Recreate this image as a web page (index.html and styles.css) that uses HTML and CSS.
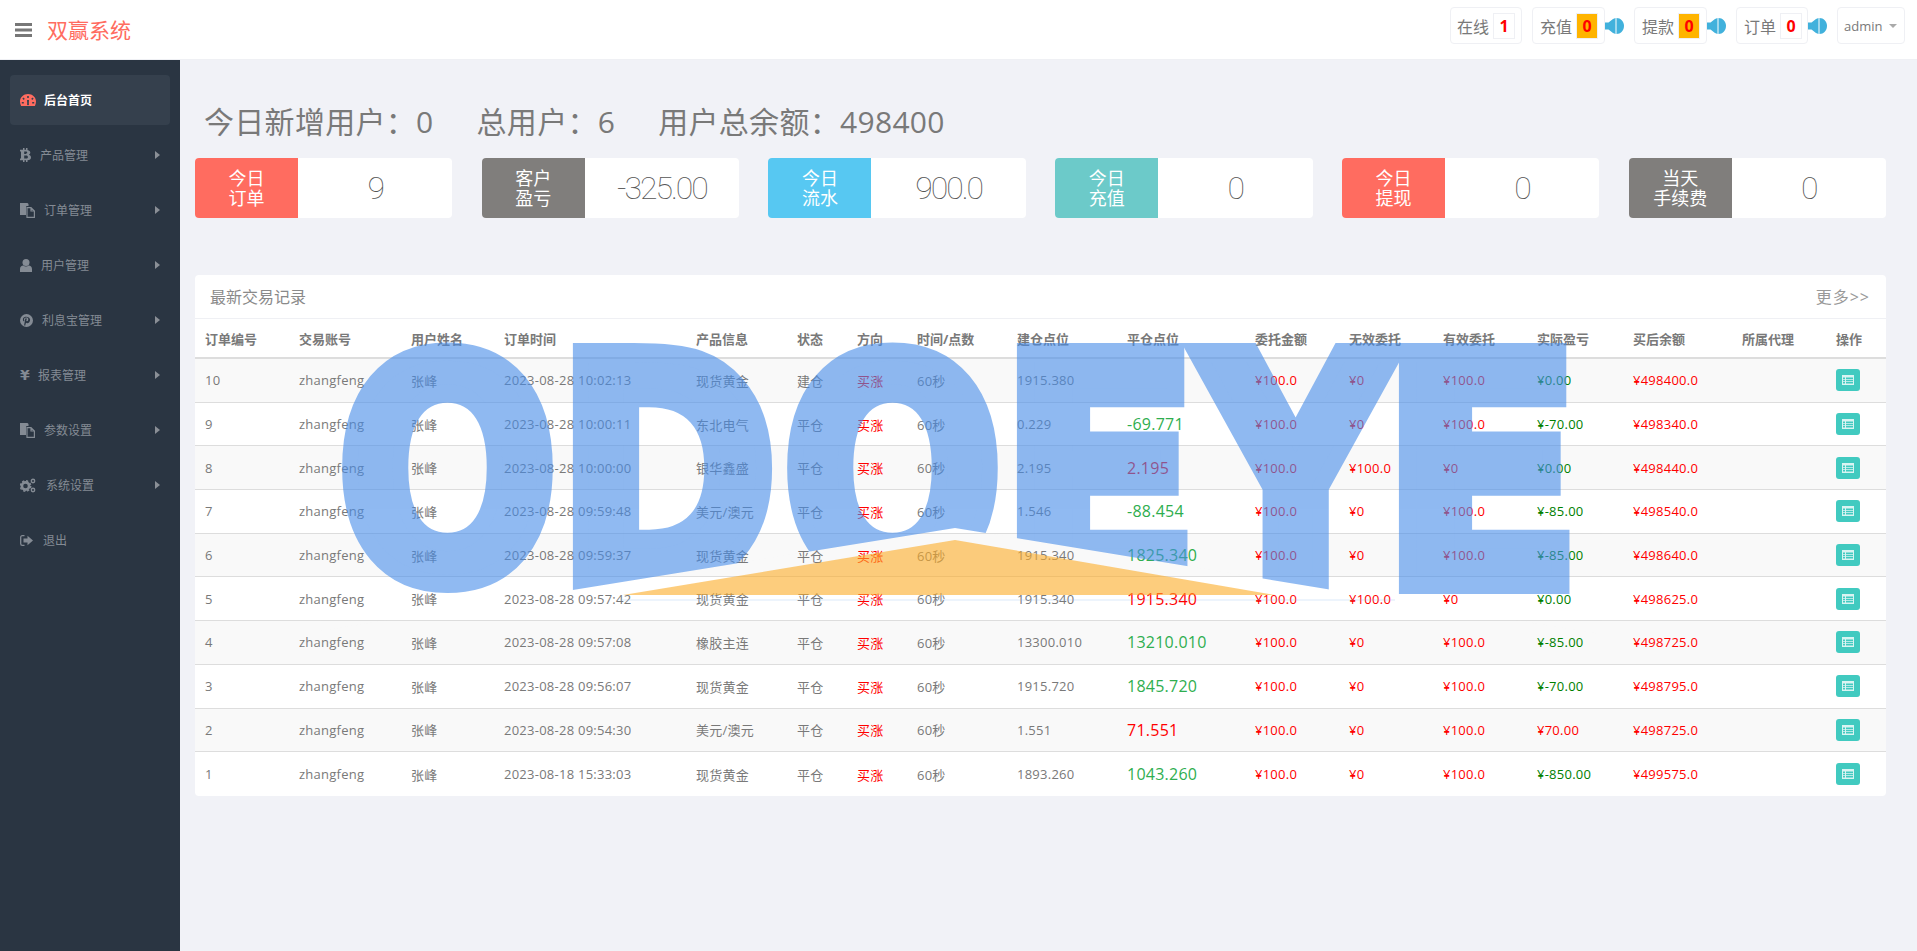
FILE: index.html
```html
<!DOCTYPE html>
<html lang="zh-CN">

<head>
    <meta charset="utf-8">
    <title>双赢系统</title>
    <link rel="stylesheet" href="styles.css">
</head>

<body>
    <header class="topbar">
        <div class="brand">
            <svg class="burger" width="17" height="14" viewBox="0 0 17 14"><path d="M0 0h17v3H0zM0 5.500h17v3H0zM0 11h17v3H0z"/></svg>
            <span class="brand_name">双赢系统</span>
        </div>
        <div class="top_right">
            <div class="notice"><span>在线</span><b class="count">1</b></div>
            <div class="notice notice_sound"><span>充值</span><b class="count count_warn">0</b></div>
            <svg class="speaker" width="19" height="16" viewBox="0 0 19 16"><path d="M0 4.500h3.500L8 1l2.500-1v16L8 15l-4.500-3.500H0z"/><path d="M11.500 0c4 0 7.500 3.500 7.500 8s-3.500 8-7.500 8z"/></svg>
            <div class="notice notice_sound"><span>提款</span><b class="count count_warn">0</b></div>
            <svg class="speaker" width="19" height="16" viewBox="0 0 19 16"><path d="M0 4.500h3.500L8 1l2.500-1v16L8 15l-4.500-3.500H0z"/><path d="M11.500 0c4 0 7.500 3.500 7.500 8s-3.500 8-7.500 8z"/></svg>
            <div class="notice notice_sound notice_last"><span>订单</span><b class="count">0</b></div>
            <svg class="speaker" width="19" height="16" viewBox="0 0 19 16"><path d="M0 4.500h3.500L8 1l2.500-1v16L8 15l-4.500-3.500H0z"/><path d="M11.500 0c4 0 7.500 3.500 7.500 8s-3.500 8-7.500 8z"/></svg>
            <div class="notice user_menu"><span class="user_name">admin</span><i class="caret_down"></i></div>
        </div>
    </header>

    <div class="body_main">
        <aside class="sidebar">
            <a class="side_item side_active">
                <svg class="side_icon" width="16" height="12" viewBox="0 0 16 12"><path fill-rule="evenodd" d="M8 0c4.500 0 8 3.300 8 7.600 0 1.700-.4 3.100-1.100 4.400H1.100C.4 10.700 0 9.300 0 7.600 0 3.300 3.500 0 8 0zM7.200 2v2h1.600V2zM3.300 3.500L2.400 4.700 3.800 6l1-1.200zM12.700 3.500L11.200 4.800l1 1.200 1.400-1.300zM7 6l.2 3.600a1 1 0 1 0 1.600 0L9 6zM1.800 8v1.500h2V8zM12.200 8v1.500h2V8z"/></svg>
                <span>后台首页</span>
            </a>
            <a class="side_item">
                <svg class="side_icon" width="11" height="14" viewBox="0 0 11 14"><path fill-rule="evenodd" d="M3 0h1.500v1.800H6V0h1.500v1.900C9.300 2.300 10.300 3.200 10.300 4.600c0 1-.5 1.700-1.400 2.100 1.300.4 2.100 1.300 2.100 2.700 0 1.800-1.300 2.700-3.500 2.800V14H6v-1.800H4.500V14H3v-1.800H0v-1.600h1V3.400H0V1.800h3zM4.200 3.500v2.400h1.500c1 0 1.500-.4 1.500-1.200s-.5-1.200-1.500-1.200zM4.200 7.500v3.100h2c1.100 0 1.700-.5 1.700-1.500s-.6-1.600-1.700-1.600z"/></svg>
                <span>产品管理</span><i class="caret_right"></i>
            </a>
            <a class="side_item">
                <svg class="side_icon" width="15" height="15" viewBox="0 0 15 15"><path d="M0 0h7.500l1 1v2H7a1 1 0 0 0-1 1v8H0z"/><path fill="none" stroke="currentColor" stroke-width="1.200" d="M7 4.600h4l3.400 3.400v6.400H7zM11 4.600V8h3.400"/></svg>
                <span>订单管理</span><i class="caret_right"></i>
            </a>
            <a class="side_item">
                <svg class="side_icon" width="12" height="13" viewBox="0 0 12 13"><circle cx="6" cy="3.500" r="3.500"/><path d="M0 13V10c0-2 1.500-3.300 3.300-3.400C4 7.100 5 7.500 6 7.500s2-.4 2.700-.9C10.500 6.700 12 8 12 10v3z"/></svg>
                <span>用户管理</span><i class="caret_right"></i>
            </a>
            <a class="side_item">
                <svg class="side_icon" width="13" height="13" viewBox="0 0 13 13"><path fill-rule="evenodd" d="M6.500 0a6.500 6.500 0 1 1 0 13 6.500 6.500 0 0 1 0-13zM5.300 2.700c-1.500.4-2.400 1.500-2.400 2.800 0 .9.400 1.600 1 1.900l.5-.9c-.3-.3-.4-.6-.4-1 0-1.100.9-1.900 2.300-1.900 1.200 0 2 .7 2 1.700 0 1.200-.6 2-1.300 2-.5 0-.8-.3-.7-.8l.6-2.100H5.300L4.100 11.200l1 .5L6 8.700c.3.300.8.500 1.300.5 1.500 0 2.800-1.500 2.800-3.400 0-1.900-1.700-3.400-4.800-3.100z"/></svg>
                <span>利息宝管理</span><i class="caret_right"></i>
            </a>
            <a class="side_item">
                <span class="yen_icon side_icon">¥</span>
                <span>报表管理</span><i class="caret_right"></i>
            </a>
            <a class="side_item">
                <svg class="side_icon" width="15" height="15" viewBox="0 0 15 15"><path d="M0 0h7.500l1 1v2H7a1 1 0 0 0-1 1v8H0z"/><path fill="none" stroke="currentColor" stroke-width="1.200" d="M7 4.600h4l3.400 3.400v6.400H7zM11 4.600V8h3.400"/></svg>
                <span>参数设置</span><i class="caret_right"></i>
            </a>
            <a class="side_item side_cogs">
                <svg class="side_icon" width="16" height="15" viewBox="0 0 16 15"><circle cx="5.500" cy="8" r="3.600" fill="none" stroke="currentColor" stroke-width="2.600"/><circle cx="5.500" cy="8" r="5.200" fill="none" stroke="currentColor" stroke-width="1.500" stroke-dasharray="2.200 1.880"/><circle cx="13" cy="3" r="1.700" fill="none" stroke="currentColor" stroke-width="1.400"/><circle cx="13" cy="12" r="1.700" fill="none" stroke="currentColor" stroke-width="1.400"/></svg>
                <span>系统设置</span><i class="caret_right"></i>
            </a>
            <a class="side_item side_cogs">
                <svg class="side_icon" width="13" height="11" viewBox="0 0 13 11"><path fill="none" stroke="currentColor" stroke-width="1.300" d="M4.500.700H2.300C1.300.700.700 1.300.700 2.300v6.400c0 1 .6 1.600 1.600 1.600h2.200"/><path d="M3.500 3.500H7.500V.8L13 5.500 7.500 10.200V7.500h-4z"/></svg>
                <span>退出</span>
            </a>
        </aside>

        <main class="content">
            <h2 class="summary">
                <span>今日新增用户：0</span>
                <span>总用户：6</span>
                <span>用户总余额：498400</span>
            </h2>

            <div class="stats">
                <div class="stat"><div class="stat_label bg_red">今日<br>订单</div><div class="stat_value">9</div></div>
                <div class="stat"><div class="stat_label bg_gray">客户<br>盈亏</div><div class="stat_value">-325.00</div></div>
                <div class="stat"><div class="stat_label bg_blue">今日<br>流水</div><div class="stat_value">900.0</div></div>
                <div class="stat"><div class="stat_label bg_teal">今日<br>充值</div><div class="stat_value">0</div></div>
                <div class="stat"><div class="stat_label bg_red">今日<br>提现</div><div class="stat_value">0</div></div>
                <div class="stat"><div class="stat_label bg_gray">当天<br>手续费</div><div class="stat_value">0</div></div>
            </div>

            <section class="panel">
                <div class="panel_head"><span>最新交易记录</span><span class="more">更多&gt;&gt;</span></div>
                <table class="orders">
                    <thead>
                        <tr>
                            <th>订单编号</th><th>交易账号</th><th>用户姓名</th><th>订单时间</th><th>产品信息</th><th>状态</th><th>方向</th><th>时间/点数</th><th>建仓点位</th><th>平仓点位</th><th>委托金额</th><th>无效委托</th><th>有效委托</th><th>实际盈亏</th><th>买后余额</th><th>所属代理</th><th>操作</th>
                        </tr>
                    </thead>
                    <tbody>
                        <tr><td>10</td><td>zhangfeng</td><td>张峰</td><td>2023-08-28 10:02:13</td><td>现货黄金</td><td>建仓</td><td class="red">买涨</td><td>60秒</td><td>1915.380</td><td class="close"></td><td class="red">¥100.0</td><td class="red">¥0</td><td class="red">¥100.0</td><td class="green">¥0.00</td><td class="red">¥498400.0</td><td></td><td><a class="btn_view"><svg width="12" height="10" viewBox="0 0 12 10"><path fill-rule="evenodd" d="M0 0h12v10H0zM1 2.500v1.400h2V2.500zM4 2.500v1.400h7V2.500zM1 4.800v1.400h2V4.800zM4 4.800v1.400h7V4.800zM1 7.100v1.400h2V7.100zM4 7.100v1.400h7V7.100z"/></svg></a></td></tr>
                        <tr><td>9</td><td>zhangfeng</td><td>张峰</td><td>2023-08-28 10:00:11</td><td>东北电气</td><td>平仓</td><td class="red">买涨</td><td>60秒</td><td>0.229</td><td class="close up">-69.771</td><td class="red">¥100.0</td><td class="red">¥0</td><td class="red">¥100.0</td><td class="green">¥-70.00</td><td class="red">¥498340.0</td><td></td><td><a class="btn_view"><svg width="12" height="10" viewBox="0 0 12 10"><path fill-rule="evenodd" d="M0 0h12v10H0zM1 2.500v1.400h2V2.500zM4 2.500v1.400h7V2.500zM1 4.800v1.400h2V4.800zM4 4.800v1.400h7V4.800zM1 7.100v1.400h2V7.100zM4 7.100v1.400h7V7.100z"/></svg></a></td></tr>
                        <tr><td>8</td><td>zhangfeng</td><td>张峰</td><td>2023-08-28 10:00:00</td><td>银华鑫盛</td><td>平仓</td><td class="red">买涨</td><td>60秒</td><td>2.195</td><td class="close red">2.195</td><td class="red">¥100.0</td><td class="red">¥100.0</td><td class="red">¥0</td><td class="green">¥0.00</td><td class="red">¥498440.0</td><td></td><td><a class="btn_view"><svg width="12" height="10" viewBox="0 0 12 10"><path fill-rule="evenodd" d="M0 0h12v10H0zM1 2.500v1.400h2V2.500zM4 2.500v1.400h7V2.500zM1 4.800v1.400h2V4.800zM4 4.800v1.400h7V4.800zM1 7.100v1.400h2V7.100zM4 7.100v1.400h7V7.100z"/></svg></a></td></tr>
                        <tr><td>7</td><td>zhangfeng</td><td>张峰</td><td>2023-08-28 09:59:48</td><td>美元/澳元</td><td>平仓</td><td class="red">买涨</td><td>60秒</td><td>1.546</td><td class="close up">-88.454</td><td class="red">¥100.0</td><td class="red">¥0</td><td class="red">¥100.0</td><td class="green">¥-85.00</td><td class="red">¥498540.0</td><td></td><td><a class="btn_view"><svg width="12" height="10" viewBox="0 0 12 10"><path fill-rule="evenodd" d="M0 0h12v10H0zM1 2.500v1.400h2V2.500zM4 2.500v1.400h7V2.500zM1 4.800v1.400h2V4.800zM4 4.800v1.400h7V4.800zM1 7.100v1.400h2V7.100zM4 7.100v1.400h7V7.100z"/></svg></a></td></tr>
                        <tr><td>6</td><td>zhangfeng</td><td>张峰</td><td>2023-08-28 09:59:37</td><td>现货黄金</td><td>平仓</td><td class="red">买涨</td><td>60秒</td><td>1915.340</td><td class="close up">1825.340</td><td class="red">¥100.0</td><td class="red">¥0</td><td class="red">¥100.0</td><td class="green">¥-85.00</td><td class="red">¥498640.0</td><td></td><td><a class="btn_view"><svg width="12" height="10" viewBox="0 0 12 10"><path fill-rule="evenodd" d="M0 0h12v10H0zM1 2.500v1.400h2V2.500zM4 2.500v1.400h7V2.500zM1 4.800v1.400h2V4.800zM4 4.800v1.400h7V4.800zM1 7.100v1.400h2V7.100zM4 7.100v1.400h7V7.100z"/></svg></a></td></tr>
                        <tr><td>5</td><td>zhangfeng</td><td>张峰</td><td>2023-08-28 09:57:42</td><td>现货黄金</td><td>平仓</td><td class="red">买涨</td><td>60秒</td><td>1915.340</td><td class="close red">1915.340</td><td class="red">¥100.0</td><td class="red">¥100.0</td><td class="red">¥0</td><td class="green">¥0.00</td><td class="red">¥498625.0</td><td></td><td><a class="btn_view"><svg width="12" height="10" viewBox="0 0 12 10"><path fill-rule="evenodd" d="M0 0h12v10H0zM1 2.500v1.400h2V2.500zM4 2.500v1.400h7V2.500zM1 4.800v1.400h2V4.800zM4 4.800v1.400h7V4.800zM1 7.100v1.400h2V7.100zM4 7.100v1.400h7V7.100z"/></svg></a></td></tr>
                        <tr><td>4</td><td>zhangfeng</td><td>张峰</td><td>2023-08-28 09:57:08</td><td>橡胶主连</td><td>平仓</td><td class="red">买涨</td><td>60秒</td><td>13300.010</td><td class="close up">13210.010</td><td class="red">¥100.0</td><td class="red">¥0</td><td class="red">¥100.0</td><td class="green">¥-85.00</td><td class="red">¥498725.0</td><td></td><td><a class="btn_view"><svg width="12" height="10" viewBox="0 0 12 10"><path fill-rule="evenodd" d="M0 0h12v10H0zM1 2.500v1.400h2V2.500zM4 2.500v1.400h7V2.500zM1 4.800v1.400h2V4.800zM4 4.800v1.400h7V4.800zM1 7.100v1.400h2V7.100zM4 7.100v1.400h7V7.100z"/></svg></a></td></tr>
                        <tr><td>3</td><td>zhangfeng</td><td>张峰</td><td>2023-08-28 09:56:07</td><td>现货黄金</td><td>平仓</td><td class="red">买涨</td><td>60秒</td><td>1915.720</td><td class="close up">1845.720</td><td class="red">¥100.0</td><td class="red">¥0</td><td class="red">¥100.0</td><td class="green">¥-70.00</td><td class="red">¥498795.0</td><td></td><td><a class="btn_view"><svg width="12" height="10" viewBox="0 0 12 10"><path fill-rule="evenodd" d="M0 0h12v10H0zM1 2.500v1.400h2V2.500zM4 2.500v1.400h7V2.500zM1 4.800v1.400h2V4.800zM4 4.800v1.400h7V4.800zM1 7.100v1.400h2V7.100zM4 7.100v1.400h7V7.100z"/></svg></a></td></tr>
                        <tr><td>2</td><td>zhangfeng</td><td>张峰</td><td>2023-08-28 09:54:30</td><td>美元/澳元</td><td>平仓</td><td class="red">买涨</td><td>60秒</td><td>1.551</td><td class="close red">71.551</td><td class="red">¥100.0</td><td class="red">¥0</td><td class="red">¥100.0</td><td class="red">¥70.00</td><td class="red">¥498725.0</td><td></td><td><a class="btn_view"><svg width="12" height="10" viewBox="0 0 12 10"><path fill-rule="evenodd" d="M0 0h12v10H0zM1 2.500v1.400h2V2.500zM4 2.500v1.400h7V2.500zM1 4.800v1.400h2V4.800zM4 4.800v1.400h7V4.800zM1 7.100v1.400h2V7.100zM4 7.100v1.400h7V7.100z"/></svg></a></td></tr>
                        <tr><td>1</td><td>zhangfeng</td><td>张峰</td><td>2023-08-18 15:33:03</td><td>现货黄金</td><td>平仓</td><td class="red">买涨</td><td>60秒</td><td>1893.260</td><td class="close up">1043.260</td><td class="red">¥100.0</td><td class="red">¥0</td><td class="red">¥100.0</td><td class="green">¥-850.00</td><td class="red">¥499575.0</td><td></td><td><a class="btn_view"><svg width="12" height="10" viewBox="0 0 12 10"><path fill-rule="evenodd" d="M0 0h12v10H0zM1 2.500v1.400h2V2.500zM4 2.500v1.400h7V2.500zM1 4.800v1.400h2V4.800zM4 4.800v1.400h7V4.800zM1 7.100v1.400h2V7.100zM4 7.100v1.400h7V7.100z"/></svg></a></td></tr>
                    </tbody>
                </table>
            </section>
        </main>
    </div>

    <!-- watermark over the page -->
    <svg class="watermark" width="1917" height="951" viewBox="0 0 1917 951">
        <defs>
            <clipPath id="wmCut"><polygon points="0,0 1917,0 1917,686 955,528 0,683"/></clipPath>
        </defs>
        <g class="wm_word" clip-path="url(#wmCut)">
            <text transform="translate(337 579.500) scale(2.600 3.070)">O</text>
            <text transform="translate(556.400 584.400) scale(2.670 3.180)">D</text>
            <text transform="translate(782 579.500) scale(2.600 3.070)">O</text>
            <text transform="translate(998.700 584.400) scale(2.950 3.180)">E</text>
            <text transform="translate(1199 584.400) scale(2.670 3.180)">Y</text>
            <text transform="translate(1380.700 584.400) scale(2.950 3.180)">E</text>
        </g>
        <polygon class="wm_roof" points="955,540 1275,595 623,595"/>
        <line class="wm_line" x1="620" y1="600" x2="1395" y2="600"/>
    </svg>
</body>

</html>
```

FILE: styles.css
```css
* {
    box-sizing: border-box;
}

body {
    margin: 0;
    height: 100vh;
    overflow: hidden;
    background-color: #f1f2f7;
    color: #797979;
    font-family: "Open Sans", "Noto Sans CJK SC", sans-serif;
    font-size: 13px;
}

.topbar {
    display: flex;
    justify-content: space-between;
    align-items: flex-start;
    height: 60px;
    background-color: #fff;
    border-bottom: 1px solid #eff0f4;
}

.brand {
    display: flex;
    align-items: center;
    height: 59px;
    padding-left: 15px;
}

.burger {
    fill: #777;
}

.brand_name {
    margin: 0 0 2px 15px;
    color: #ff6c60;
    font-size: 21px;
}

.top_right {
    display: flex;
    align-items: flex-start;
    padding: 7px 12px 0 0;
}

.notice {
    display: flex;
    align-items: center;
    height: 37px;
    padding: 0 6px;
    border: 1px solid #eff0f4;
    border-radius: 4px;
    font-size: 16px;
    margin-right: 10px;
}

.notice_sound {
    margin-right: 0;
    padding-left: 7px;
}

.notice_last {
    padding-right: 5px;
}

.count {
    display: flex;
    align-items: center;
    justify-content: center;
    width: 22px;
    height: 26px;
    margin-left: 4px;
    border: 1px solid #eff0f4;
    color: #f00;
    font-size: 16px;
    font-weight: 700;
}

.count_warn {
    background-color: #ffb400;
}

.speaker {
    margin: 11px 10px 0 0;
    fill: #41b1dc;
}

.user_menu {
    width: 68px;
    margin-right: 0;
}

.user_name {
    font-size: 13px;
}

.caret_down {
    margin-left: 7px;
    border-top: 4px solid #aaa;
    border-left: 4px solid transparent;
    border-right: 4px solid transparent;
}

.body_main {
    display: flex;
    height: calc(100vh - 60px);
}

.sidebar {
    flex: 0 0 180px;
    padding: 15px 10px 0;
    background-color: #2a3542;
    color: #848b94;
    font-size: 12px;
}

.side_item {
    display: flex;
    align-items: center;
    height: 50px;
    margin-bottom: 5px;
    padding: 0 10px;
    border-radius: 4px;
}

.side_item span:not(.side_icon) {
    flex: 1;
}

.side_icon {
    margin-right: 9px;
    fill: currentColor;
}

.side_cogs .side_icon {
    margin-right: 10px;
}

.yen_icon {
    width: 9px;
    font-family: "DejaVu Sans", sans-serif;
    font-size: 14px;
    font-weight: 700;
    line-height: 14px;
}

.side_active {
    background-color: #35404d;
    color: #fff;
    font-weight: 700;
}

.side_active .side_icon {
    color: #ff6c60;
    margin-right: 8px;
}

.caret_right {
    border-left: 5px solid #8a8f96;
    border-top: 4.500px solid transparent;
    border-bottom: 4.500px solid transparent;
}

.content {
    flex: 1;
    padding: 42px 31px 0 15px;
}

.summary {
    display: flex;
    gap: 43px;
    height: 40px;
    margin: 0 0 16px;
    padding-left: 9px;
    font-size: 30px;
    font-weight: 400;
    letter-spacing: 0.300px;
    line-height: 40px;
    white-space: nowrap;
}

.stats {
    display: grid;
    grid-template-columns: repeat(6, 1fr);
    gap: 29.400px;
    margin-bottom: 57px;
}

.stat {
    display: flex;
    height: 60px;
    overflow: hidden;
    background-color: #fff;
    border-radius: 4px;
}

.stat_label {
    display: flex;
    align-items: center;
    justify-content: center;
    flex: 0 0 103px;
    color: #fff;
    font-size: 18px;
    line-height: 20px;
    text-align: center;
}

.bg_red {
    background-color: #ff6c60;
}

.bg_gray {
    background-color: #807e7c;
}

.bg_blue {
    background-color: #57c8f2;
}

.bg_teal {
    background-color: #6ccac9;
}

.stat_value {
    flex: 1;
    color: #555;
    font-family: Roboto, "Open Sans", sans-serif;
    font-size: 32px;
    font-weight: 100;
    letter-spacing: -2px;
    line-height: 60px;
    text-align: center;
}

.panel {
    background-color: #fff;
    border-radius: 4px;
    overflow: hidden;
}

.panel_head {
    display: flex;
    justify-content: space-between;
    align-items: center;
    height: 44px;
    padding: 0 16px 2px 15px;
    border-bottom: 1px solid #eff0f4;
    color: #8a8a8a;
    font-size: 16px;
}

.more {
    color: #999;
    letter-spacing: 1px;
}

.orders {
    width: 100%;
    table-layout: fixed;
    border-collapse: separate;
    border-spacing: 0;
    white-space: nowrap;
}

.orders th {
    height: 40px;
    padding: 0 10px;
    border-bottom: 2px solid #ddd;
    font-weight: 700;
    text-align: left;
}

.orders td {
    height: 43.700px;
    padding: 0 10px;
    border-bottom: 1px solid #ddd;
    letter-spacing: 0.250px;
}

.orders tbody tr:last-child td {
    border-bottom: 0;
}

.orders tbody tr:nth-child(odd) {
    background-color: #f9f9f9;
}

.orders th:nth-child(1) { width: 94px; }
.orders th:nth-child(2) { width: 112px; }
.orders th:nth-child(3) { width: 93px; }
.orders th:nth-child(4) { width: 192px; }
.orders th:nth-child(5) { width: 101px; }
.orders th:nth-child(6) { width: 60px; }
.orders th:nth-child(7) { width: 60px; }
.orders th:nth-child(8) { width: 100px; }
.orders th:nth-child(9) { width: 110px; }
.orders th:nth-child(10) { width: 128px; }
.orders th:nth-child(11) { width: 94px; }
.orders th:nth-child(12) { width: 94px; }
.orders th:nth-child(13) { width: 94px; }
.orders th:nth-child(14) { width: 96px; }
.orders th:nth-child(15) { width: 109px; }
.orders th:nth-child(16) { width: 94px; }
.orders th:nth-child(17) { width: 60px; }

.orders .red {
    color: #f00;
}

.orders .green {
    color: #008000;
}

.orders .close {
    font-size: 16px;
}

.orders .up {
    color: #2fae4f;
}

.btn_view {
    display: flex;
    align-items: center;
    justify-content: center;
    width: 24px;
    height: 22px;
    background-color: #41cac0;
    border-radius: 3px;
}

.btn_view svg {
    fill: #d9f4f2;
}

.watermark {
    position: absolute;
    top: 0;
    left: 0;
    pointer-events: none;
}

.wm_word {
    opacity: 0.6;
    fill: #468ce9;
    stroke: #468ce9;
    stroke-width: 6px;
    stroke-linejoin: miter;
    font-family: "DejaVu Sans", sans-serif;
    font-size: 100px;
    font-weight: 700;
}

.wm_roof {
    fill: #fcac26;
    opacity: 0.6;
}

.wm_line {
    stroke: #8fb9f1;
    stroke-width: 2px;
    opacity: 0.15;
}
```
